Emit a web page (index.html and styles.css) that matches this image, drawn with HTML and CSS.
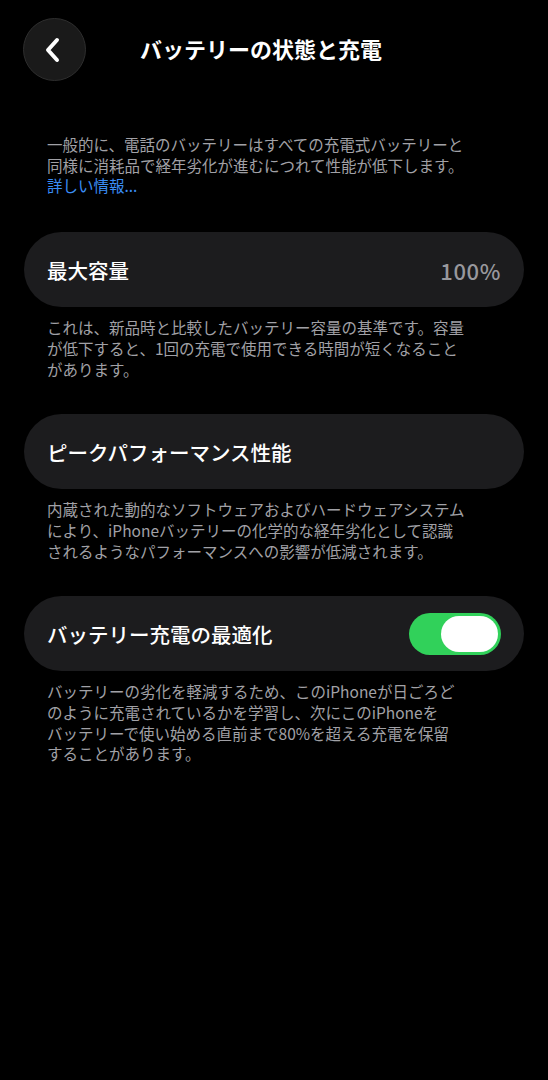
FILE: index.html
```html
<!DOCTYPE html>
<html lang="ja">
<head>
<meta charset="utf-8">
<link rel="stylesheet" href="styles.css">
</head>
<body>
<div class="screen">
  <header class="nav">
    <div class="back">
      <svg width="20" height="26" viewBox="0 0 20 26"><path d="M14 3 L5 13 L14 23" fill="none" stroke="#fff" stroke-width="4" stroke-linecap="round" stroke-linejoin="round"/></svg>
    </div>
    <h1 class="title">バッテリーの状態と充電</h1>
  </header>

  <p class="note intro">一般的に、電話のバッテリーはすべての充電式バッテリーと<br>同様に消耗品で経年劣化が進むにつれて性能が低下します。<br><span class="link">詳しい情報...</span></p>

  <div class="card"><span class="label">最大容量</span><span class="value">100%</span></div>
  <p class="note">これは、新品時と比較したバッテリー容量の基準です。容量<br>が低下すると、1回の充電で使用できる時間が短くなること<br>があります。</p>

  <div class="card"><span class="label">ピークパフォーマンス性能</span></div>
  <p class="note">内蔵された動的なソフトウェアおよびハードウェアシステム<br>により、iPhoneバッテリーの化学的な経年劣化として認識<br>されるようなパフォーマンスへの影響が低減されます。</p>

  <div class="card"><span class="label">バッテリー充電の最適化</span><span class="toggle"><span class="knob"></span></span></div>
  <p class="note">バッテリーの劣化を軽減するため、このiPhoneが日ごろど<br>のように充電されているかを学習し、次にこのiPhoneを<br>バッテリーで使い始める直前まで80%を超える充電を保留<br>することがあります。</p>
</div>
</body>
</html>
```

FILE: styles.css
```css
* { box-sizing: border-box; }
html, body { margin: 0; padding: 0; background: #000; }
body {
  font-family: "Noto Sans CJK JP", "Noto Sans", sans-serif;
  color: #fff;
  width: 548px;
  height: 1080px;
}
.screen { padding: 0 24px; }
.nav {
  position: relative;
  height: 96px;
  display: flex;
  align-items: center;
  justify-content: center;
}
.back {
  position: absolute;
  left: -1px;
  top: 18px;
  width: 63px;
  height: 63px;
  border-radius: 50%;
  background: #1a1a1a;
  border: 1px solid #2e2e2e;
  display: flex;
  align-items: center;
  justify-content: center;
}
.back svg { margin-left: -4px; }
.title {
  margin: 0;
  font-size: 22px;
  font-weight: 700;
  padding-right: 26px;
}
.note {
  margin: 0;
  padding: 0 23px;
  font-size: 15.5px;
  line-height: 20.7px;
  color: #a1a1a6;
  white-space: nowrap;
}
.intro { margin-top: 38px; margin-bottom: 36px; }
.link { color: #3a8df5; }
.card {
  height: 75px;
  border-radius: 38px;
  background: #1c1c1e;
  display: flex;
  align-items: center;
  justify-content: space-between;
  padding: 0 23px;
  margin-bottom: 10px;
}
.card + .note { margin-bottom: 35px; }
.label { font-size: 20.5px; font-weight: 500; }
.value { font-size: 22px; letter-spacing: 0.6px; color: #98989d; font-weight: 500; }
.toggle {
  width: 92px;
  height: 42px;
  border-radius: 21px;
  background: #31d15a;
  display: flex;
  align-items: center;
  justify-content: flex-end;
  padding: 0 3px;
}
.knob {
  width: 57px;
  height: 36px;
  border-radius: 18px;
  background: #fff;
}
```
